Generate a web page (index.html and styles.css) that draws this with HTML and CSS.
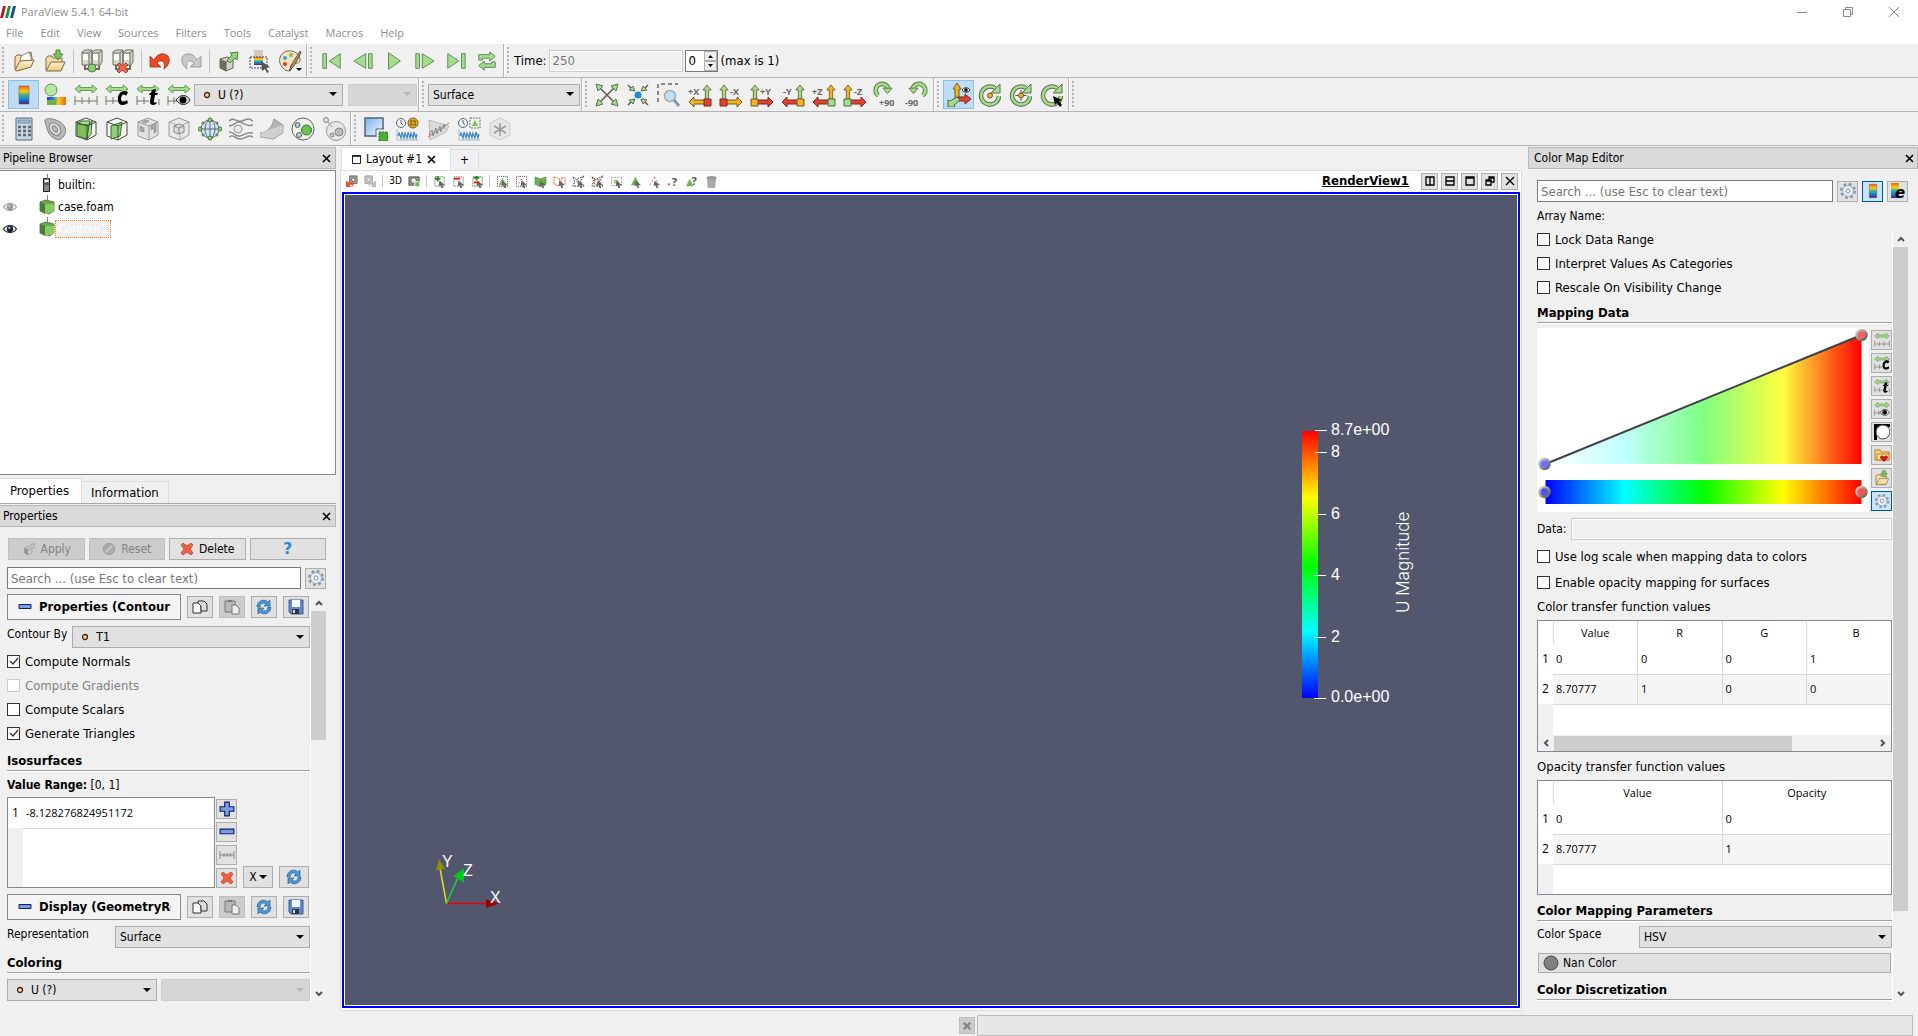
FILE: index.html
```html
<!DOCTYPE html>
<html lang="en">
<head>
<meta charset="utf-8">
<title>ParaView 5.4.1 64-bit</title>
<link rel="stylesheet" href="styles.css">
</head>
<body>
<svg class="defs" aria-hidden="true">
<defs>
<linearGradient id="jet" x1="0" y1="1" x2="0" y2="0"><stop offset="0" stop-color="#4b1a8c"/><stop offset=".25" stop-color="#1080d8"/><stop offset=".5" stop-color="#3fb08a"/><stop offset=".7" stop-color="#f5cf1c"/><stop offset="1" stop-color="#f4601a"/></linearGradient>
<linearGradient id="jetx"><stop offset="0" stop-color="#4b2a9c"/><stop offset=".3" stop-color="#1080d8"/><stop offset=".6" stop-color="#f5cf1c"/><stop offset="1" stop-color="#f4601a"/></linearGradient>
<linearGradient id="hsv"><stop offset="0" stop-color="#00f"/><stop offset=".25" stop-color="#0ff"/><stop offset=".5" stop-color="#0f0"/><stop offset=".75" stop-color="#ff0"/><stop offset="1" stop-color="#f00"/></linearGradient>
<linearGradient id="hsvfade"><stop offset="0" stop-color="#fff"/><stop offset=".25" stop-color="#bfffff"/><stop offset=".5" stop-color="#80ff80"/><stop offset=".75" stop-color="#ffff40"/><stop offset="1" stop-color="#f00"/></linearGradient>
<linearGradient id="hsvup" x1="0" y1="1" x2="0" y2="0"><stop offset="0" stop-color="#00f"/><stop offset=".25" stop-color="#0ff"/><stop offset=".5" stop-color="#0f0"/><stop offset=".75" stop-color="#ff0"/><stop offset="1" stop-color="#f00"/></linearGradient>
<linearGradient id="sky" x1="0" y1="0" x2="1" y2="1"><stop offset="0" stop-color="#7ab4e8"/><stop offset="1" stop-color="#f4faff"/></linearGradient>
<linearGradient id="paper" x1="0" y1="0" x2="0" y2="1"><stop offset="0" stop-color="#fdf2d0"/><stop offset="1" stop-color="#ecc878"/></linearGradient>
<linearGradient id="knob" x1="0" y1="0" x2="1" y2="1"><stop offset="0" stop-color="#d8d8d0"/><stop offset="1" stop-color="#55554c"/></linearGradient>
</defs>
<symbol id="arrow-r" viewBox="0 0 24 24"><path d="M6 3v18L19 12z"/></symbol>
<symbol id="open" viewBox="0 0 24 24"><path d="M3 20V8l2-2h4l1 2 4-2 5-3 1 6v3" fill="#f4ddA0" stroke="#7a6a48"/><path d="M8 13 9 7l8-4 3 8z" fill="#fff" stroke="#8a8470"/><path d="M3 21 8 12l14-1-3 7-14 4z" fill="url(#paper)" stroke="#7a6a48"/></symbol>
<symbol id="save-data" viewBox="0 0 24 24"><path d="M3 21V9l2-2h4l1 2h9v4" fill="#f4dda0" stroke="#7a6a48"/><path d="M3 22 8 13h14l-4 9z" fill="url(#paper)" stroke="#7a6a48"/><path d="M13 1h4v4h3l-5 6-5-6h3z" fill="#7cc35c" stroke="#4a8a38"/></symbol>
<symbol id="server" viewBox="0 0 24 24"><path d="M2 3 5 1h7v12l-2 3H2zM12 3l3-2h7v12l-2 3h-8z" fill="#d8d8d0" stroke="#6c6c60"/><path d="M2 4h7v11M12 4h7v11M9 4l3-3M19 4l3-3" fill="none" stroke="#6c6c60"/><path d="M3 5h5v6H3zM13 5h5v6h-5z" fill="#fff"/><path d="M5 16v4h4M19 16v4h-4" fill="none" stroke="#6c6c60" stroke-width="2"/></symbol>
<symbol id="connect" viewBox="0 0 24 24"><use href="#server"/><circle cx="12" cy="19" r="4" fill="#8fd07a" stroke="#4a7a40"/></symbol>
<symbol id="disconnect" viewBox="0 0 24 24"><use href="#server"/><path d="m8 14 3 3 4-3 2 2-3 3 3 3-2 2-4-3-3 3-2-2 3-3-3-3z" fill="#ef6a4c" stroke="#b03a24"/></symbol>
<symbol id="undo" viewBox="0 0 24 24"><path d="M2 7v11h11l-4-4c4-4 9-2 7 6C23 15 23 6 16 5c-4-1-8 2-10 6z" fill="#e84a24" stroke="#9a3018" stroke-width=".8"/></symbol>
<symbol id="redo" viewBox="0 0 24 24"><path d="M22 7v11H11l4-4c-4-4-9-2-7 6C1 15 1 6 8 5c4-1 8 2 10 6z" fill="#c8c8c8" stroke="#909090" stroke-width=".8"/></symbol>
<symbol id="extract" viewBox="0 0 24 24"><path d="m4 10 7-2 6 2v9l-7 3-6-3z" fill="#d4d4cc" stroke="#62625a"/><path d="m4 11 6 2v9l-6-3z" fill="#6c6c64"/><path d="m4 10 6 3 7-3M10 13v9" fill="none" stroke="#62625a"/><path d="m14 4 8-1-1 8-2-2-5 5-3-3 5-5z" fill="#8fd07a" stroke="#4a8a38"/></symbol>
<symbol id="range-pick" viewBox="0 0 24 24"><path d="M7 1h9v7H7z" fill="#d8c8bc"/><path d="M7 8h9v8H7z" fill="url(#jet)"/><path d="M3 8h17v11H3z" fill="none" stroke="#444" stroke-dasharray="2 1"/><path d="m14 12 9 6-4 1 3 4-2 1-2-4-3 2z" fill="#555"/></symbol>
<symbol id="palette" viewBox="0 0 24 24"><path d="M10 2C2 3-1 12 4 18c3 4 8 5 9 3s-1-3 0-5c2-3 9 0 9-5 0-6-6-10-12-9z" fill="#f6e2bc" stroke="#7a6a50"/><circle cx="13" cy="6" r="2" fill="#7cc35c"/><circle cx="7" cy="9" r="2" fill="#3aa0d8"/><circle cx="7" cy="15" r="2" fill="#d83a30"/><path d="M22 2 14 15l-3 7 5-5L23 4z" fill="#b09468" stroke="#4a4030" stroke-width=".8"/></symbol>
<symbol id="first" viewBox="0 0 24 24"><path d="M2 4h4v16H2zM21 4v16L9 12z"/></symbol>
<symbol id="back" viewBox="0 0 24 24"><path d="M18 4h4v16h-4zM15 4v16L2 12z"/></symbol>
<symbol id="fwd" viewBox="0 0 24 24"><path d="M2 4h4v16H2zM9 4v16l13-8z"/></symbol>
<symbol id="last" viewBox="0 0 24 24"><path d="M18 4h4v16h-4zM3 4v16l12-8z"/></symbol>
<symbol id="loop" viewBox="0 0 24 24"><path d="M3 11V5h12V2l6 5-6 5V9H7v2zM21 13v6H9v3l-6-5 6-5v3h8v-2z"/></symbol>
<symbol id="cbar" viewBox="0 0 24 24"><path d="M7 3h10v18H7z" fill="url(#jet)" stroke="#8a5a30" stroke-width=".6"/></symbol>
<symbol id="edit-cmap" viewBox="0 0 24 24"><circle cx="8" cy="7" r="6" fill="#b4e8a0" stroke="#6c8c60"/><path d="M4 14h19v8H4z" fill="url(#jetx)"/><path d="M4 17h9v5H4z" fill="#6ab04c"/></symbol>
<symbol id="resc" viewBox="0 0 24 24"><path d="m1 6 5-4v2.500h12V2l5 4-5 4V7.500H6V10z" fill="#a4dc8c" stroke="#6a9c58"/></symbol>
<symbol id="rescale" viewBox="0 0 24 24"><use href="#resc"/><path d="M1 13v9M8 14v7M15 14v7M23 13v9M1 18h22" stroke="#77776c" fill="none"/></symbol>
<symbol id="rescale-c" viewBox="0 0 24 24"><use href="#resc"/><path d="M1 13v9M8 14v7M1 18h12" stroke="#77776c" fill="none"/><path d="M23 9c-5-3-11 1-10 8 0 6 6 6 10 3l-1-3c-4 3-6 1-6-1 0-4 3-6 5-3z"/></symbol>
<symbol id="rescale-t" viewBox="0 0 24 24"><use href="#resc"/><path d="M1 13v9M8 14v7M1 18h12M23 16v6" stroke="#77776c" fill="none"/><path d="m16 7 4-1-1 4h3l-1 2h-2l-1 6c0 2 1 2 3 1l-1 2c-3 2-6 1-6-2l1-7h-2l1-2h1z"/></symbol>
<symbol id="rescale-eye" viewBox="0 0 24 24"><use href="#resc"/><path d="M1 13v9M7 14v7M1 18h10" stroke="#77776c" fill="none"/><path d="M9 17c4-6 11-6 14 0-3 6-10 6-14 0z" fill="#ddd" stroke="#222"/><circle cx="16" cy="17" r="3.500"/></symbol>
<symbol id="eye" viewBox="0 0 24 16"><path d="M1 8C6 0 18 0 23 8c-5 8-17 8-22 0z" fill="#f4f4f4" stroke="currentColor" stroke-width="2"/><circle cx="12" cy="8" r="5.500" fill="currentColor"/><circle cx="11" cy="6" r="2" fill="#bcd"/></symbol>
<symbol id="calc" viewBox="0 0 24 24"><path d="M4 1h16v22H4z" fill="#c4d8e8" stroke="#5a6470"/><path d="M6 3h12v3H6z" fill="#8ec4ec" stroke="#5a6470" stroke-width=".6"/><path d="M6 10h3m2 0h3m2 0h3M6 14h3m2 0h3m2 0h3M6 18h3m2 0h3m2 0h3" stroke="#666" stroke-width="2.500"/></symbol>
<symbol id="contour" viewBox="0 0 24 24"><path d="M2 5C0 1 9 0 17 5s6 12 3 15c-3 4-6 3-11 0C4 16 4 10 2 5z" fill="#b8b8b8" stroke="#888"/><ellipse cx="12" cy="12" rx="5" ry="7" transform="rotate(-38 12 12)" fill="#ddd" stroke="#888"/><ellipse cx="12" cy="12" rx="2" ry="3.500" transform="rotate(-38 12 12)" fill="#bbb" stroke="#888"/></symbol>
<symbol id="clip" viewBox="0 0 24 24"><path d="m2 5 10-4 10 4v13l-9 5-11-4z" fill="#f4f6f0" stroke="#4a4a40"/><path d="m3 7 12 1-2 14-10-3z" fill="#7cc05c" stroke="#35702a"/><path d="m3 7 4-3 9 0-1 4zM15 8l3-4-1 13-4 5z" fill="#aade94" stroke="#35702a"/><path d="m2 5 11 4 9-4M13 9v14" stroke="#4a4a40" fill="none"/></symbol>
<symbol id="slice" viewBox="0 0 24 24"><path d="m2 5 10-4 10 4v13l-9 5-11-4z" fill="#f4f6f0" stroke="#4a4a40"/><path d="m6 9 11-4-2 14-9 3z" fill="#8fd07a" stroke="#35702a"/><path d="m2 5 11 4 9-4M13 9v14" stroke="#4a4a40" fill="none"/></symbol>
<symbol id="thresh" viewBox="0 0 24 24"><path d="m2 5 10-4 10 4v13l-9 5-11-4z" fill="#e2e2e2" stroke="#999"/><path d="m2 5 11 4 9-4M13 9v14" stroke="#999" fill="none"/><path d="m4 9 4 2v4l-4-1zM15 9l5-3v9l-2 1v-5l-3 2zM9 3l4 1-3 2-4-1z" fill="#a8a8a8" stroke="#888" stroke-width=".6"/></symbol>
<symbol id="subset" viewBox="0 0 24 24"><path d="m2 5 10-4 10 4v13l-9 5-11-4z" fill="#e8e8e8" stroke="#999"/><path d="m2 5 11 4 9-4M13 9v14" stroke="#aaa" fill="none"/><path d="m7 9 5-2 5 2v6l-5 2-5-2zM7 9l5 2 5-2M12 11v6" fill="#ddd" stroke="#888"/></symbol>
<symbol id="glyph" viewBox="0 0 24 24"><circle cx="12" cy="12" r="9" fill="#cfe4f4" stroke="#5c6c7c"/><ellipse cx="12" cy="12" rx="5" ry="9" fill="none" stroke="#5c6c7c"/><path d="M1 12h22M12 3v18" stroke="#5c6c7c"/><g fill="#8fd07a" stroke="#4a7a30"><circle cx="12" cy="3" r="2"/><circle cx="12" cy="21" r="2"/><circle cx="2" cy="12" r="2"/><circle cx="22" cy="12" r="2"/><circle cx="5" cy="6" r="1"/><circle cx="19" cy="6" r="1"/><circle cx="5" cy="18" r="1"/><circle cx="19" cy="18" r="1"/></g></symbol>
<symbol id="stream" viewBox="0 0 24 24"><path d="M0 4c5-5 7 2 13 0s6-3 11 0M0 9c6-1 6-4 10-4s6 5 14 3M0 15c6 0 6 5 11 4s6-4 13-3M0 20c5-4 6 3 12 2s7-5 12-2" fill="none" stroke="#8a8a8a" stroke-width="1.500"/><circle cx="9" cy="12" r="4" fill="#e8e8e8" stroke="#999"/></symbol>
<symbol id="warp" viewBox="0 0 24 24"><path d="M0 16C8 15 12 10 14 2l9 6c-1 8-5 12-10 14z" fill="#b4b4b4" stroke="#999"/><path d="M0 16v4l13 2 10-6V8" fill="#d0d0d0" stroke="#aaa"/></symbol>
<symbol id="group" viewBox="0 0 24 24"><circle cx="12" cy="12" r="11" fill="#eef4ea" stroke="#62625a"/><circle cx="6.500" cy="8" r="2.500" fill="#aac8e0" stroke="#62625a"/><circle cx="15.500" cy="13" r="5" fill="#6cc050" stroke="#3c7030"/><circle cx="8" cy="18" r="2.500" fill="#aad8c0" stroke="#62625a"/></symbol>
<symbol id="extract-level" viewBox="0 0 24 24"><circle cx="14" cy="14" r="9.500" fill="#e8e8e8" stroke="#999"/><circle cx="4" cy="3" r="2.500" fill="#ddd" stroke="#888"/><circle cx="17" cy="15" r="4" fill="#bbb" stroke="#888"/><circle cx="10" cy="18" r="2" fill="#ccc" stroke="#888"/><path d="M6 5l4 5" stroke="#999"/></symbol>
<symbol id="sel-extract" viewBox="0 0 24 24"><path d="M1 1h18v18H1z" fill="url(#sky)" stroke="#506478" stroke-width="1.500"/><path d="M12 12h8v8h-8z" fill="#f0f0f0"/><path d="M12 20v-8h8" fill="none" stroke="#506478"/><path d="M15 15h9v9h-9z" fill="#4cb038" stroke="#2c7020" stroke-dasharray="2 1"/></symbol>
<symbol id="wave" viewBox="0 0 24 24"><path d="M2 12v11h21" fill="none" stroke="#a8bccc"/><path d="m3 19 1-3 2 5 1-6 2 6 1-5 2 5 1-6 2 6 1-5 2 5 1-6 2 6 1-4" fill="none" stroke="#3a84c0" stroke-width="1.200"/></symbol>
<symbol id="plot-time" viewBox="0 0 24 24"><use href="#wave"/><circle cx="6" cy="6" r="4.500" fill="#eef6fc" stroke="#5a6470"/><path d="M6 3v3l2 2" fill="none" stroke="#5a6470"/><circle cx="18" cy="6" r="5" fill="#e8b020" stroke="#7a5a18"/><path d="M15 4h6M15 8h6M16 4v4M20 4v4" stroke="#7a5a18"/></symbol>
<symbol id="plot-line" viewBox="0 0 24 24"><path d="M3 3 23 9 20 15 4 23z" fill="#dcdcdc" stroke="#bbb"/><path d="M2 20 23 6M3 18l3-5 1 6 3-8 1 6 3-8 1 6 3-8 1 5" fill="none" stroke="#888"/></symbol>
<symbol id="plot-sel" viewBox="0 0 24 24"><use href="#wave"/><circle cx="6" cy="6" r="4.500" fill="#eef6fc" stroke="#5a6470"/><path d="M6 3v3l2 2" fill="none" stroke="#5a6470"/><path d="M13 1h10v10H13z" fill="none" stroke="#5a8a48" stroke-dasharray="2 1"/><path d="m18 3 3 6h-6z" fill="#7cc35c"/></symbol>
<symbol id="probe" viewBox="0 0 24 24"><path d="m2 6 10-5 10 5v12l-10 5-10-5z" fill="#e6e6e6" stroke="#ccc"/><path d="M12 6v13M6 9l12 7M18 9 6 16" stroke="#999" stroke-width="1.500"/></symbol>
<symbol id="reset" viewBox="0 0 24 24"><path d="m5 5 14 14M19 5 5 19" stroke="#5e5e50" stroke-width="1.500"/><path d="m1 1 7 2-5 5zM23 1l-2 7-5-5zM1 23l2-7 5 5zM23 23l-7-2 5-5z" fill="#a4dc8c" stroke="#5a7050"/></symbol>
<symbol id="zoomto" viewBox="0 0 24 24"><path d="m2 2 5 5M22 2l-5 5M2 22l5-5M22 22l-5-5" stroke="#5e5e50" stroke-width="1.500"/><path d="M9 8 3 7l4-4zM15 8l2-5 4 4zM9 16l-2 5-4-4zM15 16l6 1-4 4z" fill="#a4dc8c" stroke="#5a7050"/><circle cx="12" cy="12" r="3.500" fill="#1f8fd8"/></symbol>
<symbol id="zoombox" viewBox="0 0 24 24"><path d="M1 19V1h20" fill="none" stroke="#666" stroke-width="1.500" stroke-dasharray="4 3"/><circle cx="13" cy="13" r="5.500" fill="#bfe2f8" stroke="#aaa" stroke-width="1.500"/><path d="m17 17 5 6" stroke="#8a9ab0" stroke-width="3"/></symbol>
<symbol id="up" viewBox="0 0 12 24"><path d="M6 0 1 6h3v11h4V6h3z" stroke="#6a5a30"/></symbol>
<symbol id="rot" viewBox="0 0 24 24"><path d="M8 18A7 7 0 1 1 19 11" fill="none" stroke="#5a7a48" stroke-width="5"/><path d="M8 18A7 7 0 1 1 19 11" fill="none" stroke="#a4dc8c" stroke-width="3"/><path d="M13 10h10l-5 6z" fill="#a4dc8c" stroke="#5a7a48"/></symbol>
<symbol id="orient" viewBox="0 0 24 24"><path d="M8 15V6H6l4-6 4 6h-2v9z" fill="#f4b41c" stroke="#6a5a30"/><path d="M10 14h8v-3l6 5-6 5v-3h-8z" fill="#e84030" stroke="#702a20"/><path d="m10 14 3 3-6 5 1 2H1v-7l2 1z" fill="#a4dc8c" stroke="#4a6a40"/><path d="M15 7c2-3 6-3 8 0-2 3-6 3-8 0z" fill="#fff" stroke="#333"/><circle cx="19" cy="7" r="1.800"/></symbol>
<symbol id="ring" viewBox="0 0 24 24"><path d="M17 5A9 9 0 1 0 21 13" fill="none" stroke="#5a7050" stroke-width="4.500"/><path d="M17 5A9 9 0 1 0 21 13" fill="none" stroke="#a4dc8c" stroke-width="2.500"/><path d="M22 1v9h-9z" fill="#a4dc8c" stroke="#5a7050"/></symbol>
<symbol id="center-show" viewBox="0 0 24 24"><use href="#ring"/><circle cx="12" cy="12.500" r="2.500" fill="#f4b41c" stroke="#6a5a30"/></symbol>
<symbol id="center-reset" viewBox="0 0 24 24"><use href="#ring"/><path d="M12 7v11M6.500 12.500h11" stroke="#555"/><circle cx="12" cy="12.500" r="2.500" fill="#f4b41c" stroke="#6a5a30"/></symbol>
<symbol id="center-pick" viewBox="0 0 24 24"><use href="#ring"/><path d="m13 13 9 4-3 1 3 4-2 2-3-4-2 2z"/></symbol>
<symbol id="cube" viewBox="0 0 16 16"><path d="m1 3 6-2 8 2v9l-5 3-9-3z" fill="#6aaa48" stroke="#4c6a3c" stroke-width=".8"/><path d="m1 3 5 2v10l-5-3z" fill="#4c7a3a"/><path d="M6 5h9v8l-9 2z" fill="#86cc60"/></symbol>
<symbol id="host" viewBox="0 0 8 14"><path d="M1 .500h6v13H1z" fill="#888" stroke="#222"/><path d="M2 2h4v2H2z" fill="#fff"/><path d="M2 6h4" stroke="#222"/></symbol>
<symbol id="gear" viewBox="0 0 18 18"><circle cx="9" cy="9" r="6.500" fill="none" stroke="#8494a4" stroke-width="3" stroke-dasharray="2.600 2.500"/><circle cx="9" cy="9" r="5.500" fill="#e8eef4" stroke="#a0acb8"/><circle cx="9" cy="9" r="2" fill="#f8f8f8" stroke="#8494a4"/></symbol>
<symbol id="copy" viewBox="0 0 16 16"><path d="M1 4h5l3 3v7H1z" fill="#fafafa" stroke="#333"/><path d="M6 2h6l3 3v7H9V7L6 4z" fill="#ddd" stroke="#333"/></symbol>
<symbol id="paste" viewBox="0 0 16 16"><path d="M1 2h10v11H1z" fill="#b8b8b8" stroke="#777"/><path d="M4 1h4v2H4z" fill="#777"/><path d="M8 6h4l3 3v6H8z" fill="#eee" stroke="#777"/></symbol>
<symbol id="refresh" viewBox="0 0 16 16"><path d="M1 8C1 2 8-1 12 3l2-2v6H8l2-2C8 3 4 4 4 8zM15 8c0 6-7 9-11 5l-2 2V9h6l-2 2c2 2 6 1 6-3z" fill="#4a9ad8" stroke="#2a5c94" stroke-width=".7"/></symbol>
<symbol id="disk" viewBox="0 0 16 16"><path d="M1 1h14v14H3l-2-2z" fill="#5c8ccc" stroke="#3c5c90"/><path d="M4 1h8v7H4z" fill="#f4f8ff"/><path d="M4 10h7v5H4z" fill="#334"/><path d="M5 11h2v3H5z" fill="#ddd"/></symbol>
<symbol id="minus" viewBox="0 0 14 14"><path d="M1 4.500h12v4H1z" fill="#7c9ce8" stroke="#102060"/></symbol>
<symbol id="plus" viewBox="0 0 14 14"><path d="M5 1h4v4h4v4H9v4H5V9H1V5h4z" fill="#7c9ce8" stroke="#102060"/></symbol>
<symbol id="redx" viewBox="0 0 14 14"><path d="m3 1 4 3 4-3 2 2-3 4 3 4-2 2-4-3-4 3-2-2 3-4-3-4z" fill="#f0603c" stroke="#b84830" stroke-width=".8"/></symbol>
<symbol id="ticks" viewBox="0 0 16 10"><path d="M1 1v8M5 3v4M8 3v4M11 3v4M15 1v8M1 5h14" stroke="#888878" fill="none"/></symbol>
<symbol id="close" viewBox="0 0 9 9"><path d="m1 1 7 7M8 1 1 8" stroke="#000" stroke-width="1.600" fill="none"/></symbol>
<symbol id="chev" viewBox="0 0 8 6"><path d="m1 5 3-3 3 3" stroke="#555" stroke-width="2" fill="none"/></symbol>
<symbol id="dot" viewBox="0 0 8 8"><circle cx="4" cy="4" r="2.500" fill="#fbd8a0" stroke="#3a2810" stroke-width="1.300"/></symbol>
<symbol id="ptr" viewBox="0 0 14 14"><path d="m7 6 6 5-3 0 1 3-2 0-1-3-2 1z" fill="#666"/></symbol>
<symbol id="box" viewBox="0 0 14 14"><path d="M2 2h10v10H2z" fill="none" stroke="#444" stroke-dasharray="1 1"/><use href="#ptr"/></symbol>
<symbol id="s-add" viewBox="0 0 14 14"><use href="#box"/><path d="M5 1v6M2 4h6" stroke="#2a8a20" stroke-width="2"/></symbol>
<symbol id="s-sub" viewBox="0 0 14 14"><use href="#box"/><path d="M2 4h7" stroke="#e02010" stroke-width="2"/></symbol>
<symbol id="s-tog" viewBox="0 0 14 14"><use href="#box"/><path d="M6 1v5M3 3h6" stroke="#2a8a20" stroke-width="2"/><path d="M3 8h6" stroke="#e02010" stroke-width="2"/></symbol>
<symbol id="s-cell" viewBox="0 0 14 14"><path d="M1.500 1.500h11v11h-11z" fill="none" stroke="#444" stroke-dasharray="1 1"/><path d="m7 3 4 8H3z" fill="#74bc54"/><use href="#ptr"/></symbol>
<symbol id="s-pt" viewBox="0 0 14 14"><path d="M1.500 1.500h11v11h-11z" fill="none" stroke="#444" stroke-dasharray="1 1"/><path d="m7 4 4 7M7 4l-4 7" stroke="#f06040" stroke-dasharray="2 2"/><use href="#ptr"/></symbol>
<symbol id="s-fcell" viewBox="0 0 14 14"><path d="m1 2 6 2 6-2v8l-6 3-6-3z" fill="#68b048" stroke="#555" stroke-width=".6" stroke-dasharray="2 1"/><use href="#ptr"/></symbol>
<symbol id="s-fpt" viewBox="0 0 14 14"><path d="m1 2 6 2v8L1 10zM9 3h4v7H9z" fill="none" stroke="#e05030" stroke-dasharray="2 1"/><use href="#ptr"/></symbol>
<symbol id="s-poly" viewBox="0 0 14 14"><path d="m1 2 4 3 8-4-4 6 4 5H1l2-5z" fill="none" stroke="#333" stroke-dasharray="2 1"/><path d="m4 6 4 0-1 4z" fill="#74bc54"/><use href="#ptr"/></symbol>
<symbol id="s-ppt" viewBox="0 0 14 14"><path d="m1 2 4 3 8-4-4 6 4 5H1l2-5z" fill="none" stroke="#333" stroke-dasharray="2 1"/><path d="M4 5h5v5H4z" fill="none" stroke="#e04020" stroke-dasharray="2 1"/><use href="#ptr"/></symbol>
<symbol id="s-block" viewBox="0 0 14 14"><path d="M1.500 2.500h11v9h-11z" fill="none" stroke="#999" stroke-dasharray="2 1"/><path d="M4 5h5v4H4z" fill="#9cc88c"/><use href="#ptr"/></symbol>
<symbol id="s-tri" viewBox="0 0 14 14"><path d="m7 2 5 9H2z" fill="#6cb84c"/><use href="#ptr"/></symbol>
<symbol id="s-tript" viewBox="0 0 14 14"><path d="m7 2 5 9M7 2l-5 9" stroke="#f06040" stroke-dasharray="2 2"/><use href="#ptr"/></symbol>
<symbol id="trash" viewBox="0 0 14 14"><path d="M2 4h10l-1 10H3z" fill="#aaa"/><ellipse cx="7" cy="3" rx="5.500" ry="2" fill="#999"/></symbol>
<symbol id="cam-undo" viewBox="0 0 14 14"><path d="M5 1h8v8H5z" fill="#a8a898" stroke="#666"/><circle cx="9" cy="5" r="2" fill="#eee" stroke="#555"/><path d="M1 6v7h6L5 11c2-2 3 0 3 2 3-4 0-7-4-5z" fill="#e8502c"/></symbol>
<symbol id="cam-redo" viewBox="0 0 14 14"><path d="M1 1h8v8H1z" fill="#ccc" stroke="#999"/><circle cx="5" cy="5" r="2" fill="#eee" stroke="#999"/><path d="M13 6v7H7l2-2c-2-2-3 0-3 2-3-4 0-7 4-5z" fill="#bbb"/></symbol>
<symbol id="cam" viewBox="0 0 14 14"><path d="M1 2h11v9H1z" fill="#909884" stroke="#555"/><circle cx="6" cy="6" r="3" fill="#eee" stroke="#555"/><circle cx="10" cy="10" r="3" fill="#6cc050" stroke="#fff"/></symbol>
</svg>

<header class="titlebar">
  <svg class="logo" viewBox="0 0 16 12"><path d="M3 0h3L3 12H0z" fill="#b01c30"/><path d="M8 0h3L8 12H5z" fill="#18963c"/><path d="M13 0h3l-3 12h-3z" fill="#184c94"/></svg>
  <span>ParaView 5.4.1 64-bit</span>
  <div class="winctl">
    <button aria-label="Minimize"><svg viewBox="0 0 12 12"><path d="M1 6.500h10"/></svg></button>
    <button aria-label="Restore"><svg viewBox="0 0 12 12"><path d="M1.500 3.500h7v7h-7zM3.500 3V1.500h7v7H9"/></svg></button>
    <button aria-label="Close"><svg viewBox="0 0 12 12"><path d="m1 1 10 10M11 1 1 11"/></svg></button>
  </div>
</header>
<nav class="menubar"><a href="#">File</a><a href="#">Edit</a><a href="#">View</a><a href="#">Sources</a><a href="#">Filters</a><a href="#">Tools</a><a href="#">Catalyst</a><a href="#">Macros</a><a href="#">Help</a></nav>

<div class="toolrow">
  <div class="tools">
    <button aria-label="Open"><svg><use href="#open"/></svg></button><button aria-label="Save data"><svg><use href="#save-data"/></svg></button><i class="sep"></i>
    <button aria-label="Connect"><svg><use href="#connect"/></svg></button><button aria-label="Disconnect"><svg><use href="#disconnect"/></svg></button><i class="sep"></i>
    <button aria-label="Undo"><svg><use href="#undo"/></svg></button><button aria-label="Redo"><svg><use href="#redo"/></svg></button><i class="sep"></i>
    <button aria-label="Auto apply"><svg><use href="#extract"/></svg></button><button aria-label="Find data"><svg><use href="#range-pick"/></svg></button><button class="has-menu" aria-label="Color palette"><svg><use href="#palette"/></svg></button>
  </div>
  <div class="tools vcr">
    <button aria-label="First frame"><svg><use href="#first"/></svg></button><button aria-label="Previous frame"><svg><use href="#back"/></svg></button><button aria-label="Play"><svg><use href="#arrow-r"/></svg></button><button aria-label="Next frame"><svg><use href="#fwd"/></svg></button><button aria-label="Last frame"><svg><use href="#last"/></svg></button><button aria-label="Loop"><svg><use href="#loop"/></svg></button>
  </div>
  <div class="tools last">
    <label for="time">Time:</label><input id="time" class="field time" value="250" disabled>
    <div class="spin"><input value="0" aria-label="Time step"><svg viewBox="0 0 13 20"><path d="M.500.500h12v9H.500zM.500 10.500h12v9H.500z" fill="#eee" stroke="#adadad"/><path d="m4 7 2.500-3L9 7zM4 13l2.500 3L9 13z"/></svg></div>
    <span>(max is 1)</span>
  </div>
</div>
<div class="toolrow">
  <div class="tools">
    <button class="on" aria-label="Color legend"><svg><use href="#cbar"/></svg></button><button aria-label="Edit color map"><svg><use href="#edit-cmap"/></svg></button><button aria-label="Rescale to data"><svg><use href="#rescale"/></svg></button><button aria-label="Rescale custom"><svg><use href="#rescale-c"/></svg></button><button aria-label="Rescale over time"><svg><use href="#rescale-t"/></svg></button><button aria-label="Rescale visible"><svg><use href="#rescale-eye"/></svg></button>
    <div class="combo with-dot color-by"><svg><use href="#dot"/></svg><select aria-label="Color by"><option>U (?)</option></select></div>
    <div class="combo component"><select aria-label="Component" disabled></select></div>
  </div>
  <div class="tools"><div class="combo repr"><select aria-label="Representation"><option>Surface</option></select></div></div>
  <div class="tools">
    <button aria-label="Reset camera"><svg><use href="#reset"/></svg></button><button aria-label="Zoom to data"><svg><use href="#zoomto"/></svg></button><button aria-label="Zoom to box"><svg><use href="#zoombox"/></svg></button>
    <button aria-label="Set view +X"><svg viewBox="0 0 24 24"><use href="#up" x="14" width="10" height="24" fill="#a4dc8c"/><path d="m1 19 5-5v3h11v4H6v3z" fill="#f4b41c" stroke="#6a5a30"/><path d="M16 16h7v7h-7z" fill="#e84030" stroke="#702a20"/><text x="0" y="12">+X</text></svg></button>
    <button aria-label="Set view -X"><svg viewBox="0 0 24 24"><use href="#up" x="0" width="10" height="24" fill="#a4dc8c"/><path d="m23 19-5-5v3H7v4h11v3z" fill="#f4b41c" stroke="#6a5a30"/><path d="M1 16h7v7H1z" fill="#e84030" stroke="#702a20"/><text x="11" y="12">-X</text></svg></button>
    <button aria-label="Set view +Y"><svg viewBox="0 0 24 24"><use href="#up" x="0" width="10" height="24" fill="#a4dc8c"/><path d="m23 19-5-5v3H7v4h11v3z" fill="#e84030" stroke="#702a20"/><path d="M1 16h7v7H1z" fill="#f4b41c" stroke="#6a5a30"/><text x="10" y="12">+Y</text></svg></button>
    <button aria-label="Set view -Y"><svg viewBox="0 0 24 24"><use href="#up" x="14" width="10" height="24" fill="#a4dc8c"/><path d="m1 19 5-5v3h11v4H6v3z" fill="#e84030" stroke="#702a20"/><path d="M16 16h7v7h-7z" fill="#f4b41c" stroke="#6a5a30"/><text x="2" y="12">-Y</text></svg></button>
    <button aria-label="Set view +Z"><svg viewBox="0 0 24 24"><use href="#up" x="14" width="10" height="24" fill="#f4b41c"/><path d="m1 19 5-5v3h11v4H6v3z" fill="#e84030" stroke="#702a20"/><path d="M16 16h7v7h-7z" fill="#a4dc8c" stroke="#4a6a40"/><text x="0" y="12">+Z</text></svg></button>
    <button aria-label="Set view -Z"><svg viewBox="0 0 24 24"><use href="#up" x="0" width="10" height="24" fill="#f4b41c"/><path d="m23 19-5-5v3H7v4h11v3z" fill="#e84030" stroke="#702a20"/><path d="M1 16h7v7H1z" fill="#a4dc8c" stroke="#4a6a40"/><text x="11" y="12">-Z</text></svg></button>
    <button aria-label="Rotate +90"><svg viewBox="0 0 24 24"><use href="#rot" x="-3" y="-4" width="22" height="22"/><text x="5" y="23">+90</text></svg></button>
    <button aria-label="Rotate -90"><svg viewBox="0 0 24 24"><use href="#rot" transform="matrix(-1 0 0 1 25 -4)" width="22" height="22"/><text x="0" y="23">-90</text></svg></button>
  </div>
  <div class="tools">
    <button class="on" aria-label="Orientation axes"><svg><use href="#orient"/></svg></button><button aria-label="Show center"><svg><use href="#center-show"/></svg></button><button aria-label="Reset center"><svg><use href="#center-reset"/></svg></button><button aria-label="Pick center"><svg><use href="#center-pick"/></svg></button>
  </div>
  <div class="tools last"></div>
</div>
<div class="toolrow">
  <div class="tools">
    <button aria-label="Calculator"><svg><use href="#calc"/></svg></button><button aria-label="Contour"><svg><use href="#contour"/></svg></button><button aria-label="Clip"><svg><use href="#clip"/></svg></button><button aria-label="Slice"><svg><use href="#slice"/></svg></button><button aria-label="Threshold"><svg><use href="#thresh"/></svg></button><button aria-label="Extract subset"><svg><use href="#subset"/></svg></button><button aria-label="Glyph"><svg><use href="#glyph"/></svg></button><button aria-label="Stream tracer"><svg><use href="#stream"/></svg></button><button aria-label="Warp"><svg><use href="#warp"/></svg></button><button aria-label="Group datasets"><svg><use href="#group"/></svg></button><button aria-label="Extract level"><svg><use href="#extract-level"/></svg></button>
  </div>
  <div class="tools last">
    <button aria-label="Extract selection"><svg><use href="#sel-extract"/></svg></button><button aria-label="Plot global variables"><svg><use href="#plot-time"/></svg></button><button aria-label="Plot over line"><svg><use href="#plot-line"/></svg></button><button aria-label="Plot selection over time"><svg><use href="#plot-sel"/></svg></button><button aria-label="Probe"><svg><use href="#probe"/></svg></button>
  </div>
</div>

<main class="workspace">
  <aside class="left">
    <h2 class="dock">Pipeline Browser<button aria-label="Close"><svg><use href="#close"/></svg></button></h2>
    <ul class="tree">
      <li><span class="vis"></span><span class="node"><svg class="host"><use href="#host"/></svg></span><span class="name">builtin:</span></li>
      <li><span class="vis off"><svg><use href="#eye"/></svg></span><span class="node"><svg><use href="#cube"/></svg></span><span class="name">case.foam</span></li>
      <li><span class="vis"><svg><use href="#eye"/></svg></span><span class="node"><svg><use href="#cube"/></svg></span><span class="name selected">Contour1</span></li>
    </ul>
    <div class="tabs"><button class="active">Properties</button><button>Information</button></div>
    <h2 class="dock">Properties<button aria-label="Close"><svg><use href="#close"/></svg></button></h2>
    <div class="actions">
      <button class="btn" disabled><svg class="faded"><use href="#extract"/></svg>Apply</button>
      <button class="btn" disabled><svg viewBox="0 0 16 16"><circle cx="8" cy="8" r="6.500" fill="#aaa" stroke="#999"/><path d="m4 12 8-8" stroke="#ccc" stroke-width="2"/></svg>Reset</button>
      <button class="btn"><svg><use href="#redx"/></svg>Delete</button>
      <button class="btn help">?</button>
    </div>
    <div class="searchrow"><input class="field" placeholder="Search ... (use Esc to clear text)" aria-label="Search properties"><button class="btn sq" aria-label="Advanced"><svg><use href="#gear"/></svg></button></div>
    <div class="scroller">
      <div class="props">
        <div class="group-head"><button class="fold"><svg><use href="#minus"/></svg><span>Properties (Contour1)</span></button><button class="btn" aria-label="Copy"><svg><use href="#copy"/></svg></button><button class="btn" disabled aria-label="Paste"><svg><use href="#paste"/></svg></button><button class="btn" aria-label="Restore"><svg><use href="#refresh"/></svg></button><button class="btn" aria-label="Save"><svg><use href="#disk"/></svg></button></div>
        <div class="row"><label for="contour-by">Contour By</label><div class="combo with-dot"><svg><use href="#dot"/></svg><select id="contour-by"><option>T1</option></select></div></div>
        <div class="checks">
          <label><input type="checkbox" checked>Compute Normals</label>
          <label class="dim"><input type="checkbox" disabled>Compute Gradients</label>
          <label><input type="checkbox">Compute Scalars</label>
          <label><input type="checkbox" checked>Generate Triangles</label>
        </div>
        <h3>Isosurfaces</h3>
        <p class="range"><b>Value Range:</b> [0, 1]</p>
        <div class="iso">
          <div class="grid"><table><tbody><tr><th scope="row">1</th><td>-8.128276824951172</td></tr></tbody></table></div>
          <div class="stack"><button class="btn" aria-label="Add"><svg><use href="#plus"/></svg></button><button class="btn" aria-label="Remove"><svg><use href="#minus"/></svg></button><button class="btn" aria-label="Add range"><svg><use href="#ticks"/></svg></button><button class="btn" aria-label="Remove all"><svg><use href="#redx"/></svg></button></div>
          <button class="btn wide">X<svg class="tri" viewBox="0 0 8 5"><path d="M0 0h8L4 4z"/></svg></button><button class="btn wide" aria-label="Reset values"><svg><use href="#refresh"/></svg></button>
        </div>
        <div class="group-head"><button class="fold"><svg><use href="#minus"/></svg><span>Display (GeometryRepresentation)</span></button><button class="btn" aria-label="Copy"><svg><use href="#copy"/></svg></button><button class="btn" disabled aria-label="Paste"><svg><use href="#paste"/></svg></button><button class="btn" aria-label="Restore"><svg><use href="#refresh"/></svg></button><button class="btn" aria-label="Save"><svg><use href="#disk"/></svg></button></div>
        <div class="row repr-row"><label for="repr">Representation</label><div class="combo"><select id="repr"><option>Surface</option></select></div></div>
        <h3>Coloring</h3>
        <div class="pair"><div class="combo with-dot"><svg><use href="#dot"/></svg><select aria-label="Coloring array"><option>U (?)</option></select></div><div class="combo"><select aria-label="Coloring component" disabled></select></div></div>
      </div>
      <div class="vbar short"><svg><use href="#chev"/></svg><i></i><svg class="down"><use href="#chev"/></svg></div>
    </div>
  </aside>

  <section class="center">
    <div class="tabs views"><button class="active"><svg class="win" viewBox="0 0 10 10"><path d="M.500.500h9v9h-9zM0 1.500h10" fill="none" stroke="#000"/></svg>Layout #1<svg><use href="#close"/></svg></button><button class="add">+</button></div>
    <div class="frame">
      <div class="viewbar">
        <button aria-label="Camera undo"><svg><use href="#cam-undo"/></svg></button><button aria-label="Camera redo"><svg><use href="#cam-redo"/></svg></button><i></i>
        <button class="threed">3D</button><button aria-label="Adjust camera"><svg><use href="#cam"/></svg></button><i></i>
        <button aria-label="Add selection"><svg><use href="#s-add"/></svg></button><button aria-label="Subtract selection"><svg><use href="#s-sub"/></svg></button><button aria-label="Toggle selection"><svg><use href="#s-tog"/></svg></button><i></i>
        <button aria-label="Select cells on"><svg><use href="#s-cell"/></svg></button><button aria-label="Select points on"><svg><use href="#s-pt"/></svg></button><button aria-label="Select cells through"><svg><use href="#s-fcell"/></svg></button><button aria-label="Select points through"><svg><use href="#s-fpt"/></svg></button><button aria-label="Select cells polygon"><svg><use href="#s-poly"/></svg></button><button aria-label="Select points polygon"><svg><use href="#s-ppt"/></svg></button><button aria-label="Select block"><svg><use href="#s-block"/></svg></button><button aria-label="Interactive cells"><svg><use href="#s-tri"/></svg></button><button aria-label="Interactive points"><svg><use href="#s-tript"/></svg></button><button aria-label="Hover points"><svg viewBox="0 0 14 14"><path d="M1 9h2v2H1z" fill="#e04020"/><text x="5" y="12">?</text></svg></button><button aria-label="Hover cells"><svg viewBox="0 0 14 14"><path d="m4 4 4 8H0z" fill="#6cb84c"/><text x="6" y="11">?</text></svg></button><button aria-label="Clear selection"><svg><use href="#trash"/></svg></button>
        <a class="vname" href="#">RenderView1</a>
        <div class="vbtns">
          <button aria-label="Split horizontal"><svg viewBox="0 0 10 10"><path d="M1 1h8v8H1zM5 1v8"/></svg></button><button aria-label="Split vertical"><svg viewBox="0 0 10 10"><path d="M1 1h8v8H1zM1 5h8"/></svg></button><button aria-label="Maximize"><svg viewBox="0 0 10 10"><path d="M1 1h8v8H1zM1 2h8"/></svg></button><button aria-label="Float"><svg viewBox="0 0 10 10"><path d="M1 4h5v5H1zM1 5h5M4 4V1h5v5H6M4 2h5"/></svg></button><button aria-label="Close view"><svg viewBox="0 0 10 10"><path d="m1 1 8 8M9 1 1 9"/></svg></button>
        </div>
      </div>
      <div class="canvas">
        <svg class="legend" viewBox="0 0 120 280" aria-label="Color legend">
          <path d="M5 6h16v267H5z" fill="url(#hsvup)"/>
          <path d="M18 5.500h12M18 27.500h12M17 89.500h12M17 150.500h12M17 212.500h12M17 273.500h12" stroke="#fff"/>
          <text x="34" y="10">8.7e+00</text><text x="34" y="32">8</text><text x="34" y="94">6</text><text x="34" y="155">4</text><text x="34" y="217">2</text><text x="34" y="277">0.0e+00</text>
          <text class="axis-title" transform="translate(112 188) rotate(-90)">U Magnitude</text>
        </svg>
        <svg class="triad" viewBox="0 0 90 75">
          <path d="M21.500 58.500H64" stroke="#f00000" stroke-width="1.500"/><path d="m61 54 13 4.500L61 63z" fill="#900"/>
          <path d="m21.500 58.500-7-38" stroke="#e0e020" stroke-width="1.500"/><path d="m14 14-3 11 9-1z" fill="#8c8c00"/>
          <path d="m21.500 58.500 11-25" stroke="#20d040" stroke-width="1.500"/><path d="m38 25-8 6 8 5z" fill="#00c818" stroke="#00c818" stroke-width="2"/>
          <text x="65" y="58">X</text><text x="17" y="22">Y</text><text x="38" y="31">Z</text>
        </svg>
      </div>
    </div>
  </section>

  <aside class="right">
    <h2 class="dock">Color Map Editor<button aria-label="Close"><svg><use href="#close"/></svg></button></h2>
    <div class="searchrow"><input class="field" placeholder="Search ... (use Esc to clear text)" aria-label="Search color map"><button class="btn sq" aria-label="Advanced"><svg><use href="#gear"/></svg></button><button class="btn sq on" aria-label="Show legend"><svg><use href="#cbar"/></svg></button><button class="btn sq" aria-label="Edit legend"><svg viewBox="0 0 18 18"><path d="M2 1h8v15H2z" fill="url(#jet)"/><text class="e" x="6" y="16">e</text></svg></button></div>
    <p class="array">Array Name:</p>
    <div class="scroller">
      <div class="cmap">
        <div class="checks">
          <label><input type="checkbox">Lock Data Range</label>
          <label><input type="checkbox">Interpret Values As Categories</label>
          <label><input type="checkbox">Rescale On Visibility Change</label>
        </div>
        <h3>Mapping Data</h3>
        <div class="mapping">
          <svg class="curve" viewBox="0 0 331 184">
            <path d="M8 136 324 7v129z" fill="url(#hsvfade)"/><path d="M8 152h316v24H8z" fill="url(#hsv)"/><path d="M8 136 324 7" stroke="#404048" stroke-width="2"/>
            <g stroke="url(#knob)" stroke-width="2.500"><circle cx="7" cy="136" r="5" fill="#7070ff"/><circle cx="324" cy="7" r="5" fill="#ff6060"/><circle cx="7" cy="164" r="5" fill="#5050f0"/><circle cx="324" cy="164" r="5" fill="#ff5050"/></g>
          </svg>
          <div class="stack">
            <button class="btn" aria-label="Rescale to data"><svg><use href="#rescale"/></svg></button><button class="btn" aria-label="Rescale custom"><svg><use href="#rescale-c"/></svg></button><button class="btn" aria-label="Rescale over time"><svg><use href="#rescale-t"/></svg></button><button class="btn" aria-label="Rescale visible"><svg><use href="#rescale-eye"/></svg></button>
            <button class="btn" aria-label="Invert"><svg viewBox="0 0 16 16"><path d="M0 0h16v3H3v13H0z"/><circle cx="9" cy="8" r="7" fill="#fff" stroke="#444"/></svg></button>
            <button class="btn" aria-label="Choose preset"><svg viewBox="0 0 16 16"><path d="M1 3h5l1 2h8v8H1z" fill="#fbd870" stroke="#c07820"/><path d="M3 7h12v6H3z" fill="#fff0a8" stroke="#c07820"/><path d="M10 15 6 11c0-3 3-3 4-1 1-2 4-2 4 1z" fill="#d01818"/></svg></button>
            <button class="btn" aria-label="Save preset"><svg><use href="#save-data"/></svg></button><button class="btn on" aria-label="Advanced"><svg><use href="#gear"/></svg></button>
          </div>
        </div>
        <div class="data"><label for="data">Data:</label><input id="data" class="field" disabled></div>
        <div class="checks loose">
          <label><input type="checkbox">Use log scale when mapping data to colors</label>
          <label><input type="checkbox">Enable opacity mapping for surfaces</label>
        </div>
        <p class="cap">Color transfer function values</p>
        <div class="grid color-table">
          <table><thead><tr><th></th><th>Value</th><th>R</th><th>G</th><th class="cut">B</th></tr></thead><tbody><tr><th scope="row">1</th><td>0</td><td>0</td><td>0</td><td>1</td></tr><tr><th scope="row">2</th><td>8.70777</td><td>1</td><td>0</td><td>0</td></tr></tbody></table>
          <div class="hbar"><svg class="l"><use href="#chev"/></svg><div><i></i></div><svg class="r"><use href="#chev"/></svg></div>
        </div>
        <p class="cap">Opacity transfer function values</p>
        <div class="grid opacity-table">
          <table><thead><tr><th></th><th>Value</th><th>Opacity</th></tr></thead><tbody><tr><th scope="row">1</th><td>0</td><td>0</td></tr><tr><th scope="row">2</th><td>8.70777</td><td>1</td></tr></tbody></table>
        </div>
        <h3>Color Mapping Parameters</h3>
        <div class="row space"><label for="space">Color Space</label><div class="combo"><select id="space"><option>HSV</option></select></div></div>
        <button class="btn nan"><svg viewBox="0 0 16 16"><circle cx="8" cy="8" r="7" fill="#808080" stroke="#444"/></svg>Nan Color</button>
        <h3>Color Discretization</h3>
      </div>
      <div class="vbar"><svg><use href="#chev"/></svg><i></i><svg class="down"><use href="#chev"/></svg></div>
    </div>
  </aside>
</main>

<footer class="status"><button class="btn" disabled aria-label="Abort"><svg viewBox="0 0 10 10"><path d="m1 1 8 8M9 1 1 9" stroke="#888" stroke-width="3"/></svg></button><div class="progress"></div></footer>
</body>
</html>
```
FILE: styles.css
```css
* { box-sizing: border-box; margin: 0; padding: 0; }
:root {
  --bg: #f0f0f0;
  --line: #adadad;
  --ui: "DejaVu Sans Condensed", "DejaVu Sans", sans-serif;
  --seg: "Open Sans", "Noto Sans", sans-serif;
}
body { display: flex; flex-direction: column; height: 100vh; overflow: hidden; background: var(--bg); font: 13px/16px var(--ui); color: #000; }
button, input, select { font: inherit; color: inherit; border: 0; background: none; border-radius: 0; appearance: none; }
svg { display: block; flex: none; }
.defs { position: absolute; width: 0; height: 0; }
ul { list-style: none; }

/* window chrome */
.titlebar { display: flex; align-items: center; height: 22px; flex: none; padding-top: 2px; background: #fff; color: #8c8c8c; font: 11px/16px var(--seg); }
.logo { width: 16px; height: 12px; margin-right: 5px; }
.winctl { display: flex; margin-left: auto; padding-right: 1px; }
.winctl button { width: 46px; height: 20px; display: grid; place-items: center; }
.winctl svg { width: 12px; height: 12px; fill: none; stroke: #888; }
.menubar { display: flex; align-items: center; gap: 17px; height: 22px; flex: none; padding-left: 6px; background: #fff; font: 11px/16px var(--seg); }
.menubar a { color: #8c8c8c; text-decoration: none; }

/* toolbars */
.toolrow { display: flex; flex: none; height: 34px; border-bottom: 1px solid #b4b4b4; }
.tools { display: flex; align-items: center; padding-right: 1px; border-right: 1px solid #b4b4b4; box-shadow: 1px 0 #fff; margin-right: 1px; }
.tools.last { border: 0; box-shadow: none; }
.tools::before { content: ""; width: 2px; height: 27px; margin: 0 4px 0 2px; background: repeating-linear-gradient(#b4b4b4 0 2px, transparent 2px 4px); }
.tools > button { position: relative; display: grid; place-items: center; width: 31px; height: 29px; }
.tools > button svg { width: 24px; height: 24px; overflow: visible; }
.tools > button.on { background: #bfdcf5; border: 1px solid #88bfee; }
.tools text { font: bold 9px var(--seg); fill: #666; }
.tools .has-menu::after { content: ""; position: absolute; right: 3px; bottom: 4px; border: 3px solid transparent; border-top-color: #000; border-bottom: 0; }
.tools .sep { width: 1px; height: 24px; margin: 0 2px 0 3px; background: #c4c4c4; }
.vcr { fill: #a4dc8c; stroke: #5c8450; stroke-width: 1px; }
.vcr > button svg { width: 22px; height: 22px; }
.tools label { margin: 0 2px 0 1px; }
.field { height: 22px; padding: 0 3px; background: #fff; border: 1px solid #7a7a7a; min-width: 0; }
.field::placeholder { color: #757575; opacity: 1; }
.field:disabled { background: var(--bg); border-color: #ccc; box-shadow: inset 0 0 0 1px #fff; color: #777; }
.time { width: 134px; margin-right: 2px; }
.spin { display: flex; width: 33px; height: 22px; margin-right: 3px; background: #fff; border: 1px solid #7a7a7a; }
.spin input { width: 18px; padding-left: 3px; }
.spin svg { width: 13px; height: 20px; }

.combo { position: relative; height: 22px; min-width: 0; font-size: 12px; }
.combo select { width: 100%; height: 22px; padding: 0 18px 0 4px; background: #e1e1e1 url('data:image/svg+xml,<svg xmlns="http://www.w3.org/2000/svg" width="8" height="5"><path d="M0 0h8L4 4z"/></svg>') no-repeat right 5px center; border: 1px solid var(--line); }
.combo select:disabled { background-color: #ccc; background-image: url('data:image/svg+xml,<svg xmlns="http://www.w3.org/2000/svg" width="8" height="5"><path d="M0 0h8L4 4z" fill="%23a0a0a0"/></svg>'); border-color: #bfbfbf; }
.with-dot svg { position: absolute; left: 9px; top: 7px; width: 8px; height: 8px; }
.with-dot select { padding-left: 23px; }
.color-by { width: 149px; margin-right: 5px; }
.component { width: 69px; }
.repr { width: 152px; }

/* docks */
.workspace { display: grid; grid-template-columns: 336px minmax(0, 1fr) 390px; flex: 1; min-height: 0; padding-top: 1px; }
.left, .right, .center { display: flex; flex-direction: column; min-height: 0; }
.dock { display: flex; align-items: center; justify-content: space-between; flex: none; height: 22px; padding: 0 3px; background: #d9d9d9; border: 1px solid #b8b8b8; border-left: 0; font: 12px/16px var(--ui); }
.right .dock { padding: 0 2px 0 5px; border-left: 1px solid #b8b8b8; }
.dock button { width: 11px; height: 11px; padding: 1px; }
.dock svg { width: 9px; height: 9px; }
.tree { height: 305px; flex: none; margin: 1px 0 4px; padding-top: 3px; background: #fff; border: 1px solid #828790; border-left: 0; font-size: 12px; }
.tree li { display: flex; align-items: center; height: 22px; }
.vis { width: 39px; padding-left: 3px; color: #1a2430; }
.vis.off { color: #999; }
.vis svg { width: 14px; height: 10px; }
.node { position: relative; width: 16px; }
.node::before { content: ""; position: absolute; left: 8px; top: -4px; width: 1px; height: 5px; background: #808080; }
.node svg { width: 16px; height: 16px; }
.node .host { width: 15px; height: 14px; }
.name { padding: 0 3px; }
.selected { padding: 0 2px; border: 1px dotted #f08030; background: var(--bg); color: #fff; }
.tabs { display: flex; flex: none; align-items: flex-end; height: 25px; margin-bottom: 1px; border-bottom: 1px solid #a8a8a8; }
.tabs button { height: 22px; padding: 0 9px; border: 1px solid #dcdcdc; border-left: 0; border-bottom: 0; }
.tabs .active { height: 25px; padding: 0 12px 0 10px; background: #fff; }
.actions { display: grid; grid-template-columns: repeat(4, 1fr); gap: 4px; flex: none; margin: 11px 10px 7px 8px; }
.btn { display: flex; align-items: center; justify-content: center; gap: 5px; height: 22px; background: #e1e1e1; border: 1px solid var(--line); font-size: 12px; }
.btn:disabled { background: #ccc; border-color: #bfbfbf; color: #838383; }
.btn.on { background: #cce4f7; border-color: #00549a; }
.btn svg { width: 16px; height: 16px; }
.actions svg { width: 14px; height: 14px; }
.faded { filter: grayscale(1) opacity(.6); }
.help { font: bold 16px/20px "DejaVu Sans", sans-serif; color: #2a8cd0; }
.searchrow { display: flex; align-items: center; flex: none; gap: 4px; margin: 0 10px 5px 7px; }
.searchrow .field { flex: 1; }
.btn.sq { width: 21px; height: 21px; }
.sq svg { width: 18px; height: 18px; }
.sq .e { font: italic 900 15px "DejaVu Sans", sans-serif; }
.scroller { display: flex; flex: 1; min-height: 0; margin: 0 10px 12px 7px; }
.props, .cmap { flex: 1; min-width: 0; overflow: hidden; }
.vbar { display: flex; flex-direction: column; align-items: center; justify-content: space-between; width: 16px; padding: 6px 0; border-left: 1px solid #fff; }
.vbar svg, .hbar svg { width: 8px; height: 6px; }
.vbar i { align-self: stretch; height: 664px; margin: 5px 0 auto; background: #cdcdcd; }
.short i { height: 129px; }
.down { transform: rotate(180deg); }

.group-head { display: flex; align-items: center; gap: 6px; height: 26px; margin-bottom: 6px; padding-right: 1px; }
.group-head .btn { width: 26px; flex: none; }
.fold { display: flex; align-items: center; flex: 1; min-width: 0; height: 26px; padding: 0 9px; background: #f4f4f4; border: 1px solid #828790; font-weight: bold; }
.fold svg { width: 16px; height: 14px; margin-right: 6px; }
.fold span { overflow: hidden; white-space: nowrap; }
.row { display: flex; height: 22px; }
.row .combo { flex: 1; }
.row label { font-size: 12px; line-height: 17px; margin-right: 5px; }
.repr-row label { width: 103px; }
.checks label { display: flex; align-items: center; height: 24px; }
.props .checks { padding-top: 2px; }
.dim { color: #838383; }
input[type="checkbox"] { width: 13px; height: 13px; margin: 0 5px 2px 0; background: #fff; border: 1px solid #333; }
input[type="checkbox"]:checked { background: url('data:image/svg+xml,<svg xmlns="http://www.w3.org/2000/svg" width="11" height="11"><path d="m2 5 3 3 5-6" fill="none" stroke="%23333" stroke-width="1.300"/></svg>') #fff; }
input[type="checkbox"]:disabled { border-color: #ccc; }
h3 { font: bold 13px/16px var(--ui); height: 18px; border-bottom: 1px solid #a0a0a0; box-shadow: 0 1px #fff; }
.props h3 { margin: 7px 0 6px; }
.range { height: 16px; margin-bottom: 4px; font-size: 12px; }
.iso { display: flex; align-items: flex-end; gap: 6px; margin-bottom: 6px; }
.iso .grid { width: 208px; height: 91px; margin-right: -5px; }
.grid { display: flex; flex-direction: column; background: linear-gradient(90deg, #f0f0f0 15px, #fff 15px); border: 1px solid #828790; }
table { width: 100%; border-collapse: collapse; table-layout: fixed; font: 11px/14px var(--seg); }
td, thead th { border-right: 1px solid #d8d8d8; }
td { height: 30px; padding: 0 3px; border-bottom: 1px solid #d8d8d8; }
th { width: 15px; background: #fff; font-weight: normal; text-align: center; font-size: 12px; }
thead th { height: 23px; width: auto; font-size: 11px; }
thead th:first-child { width: 15px; }
tr:nth-child(2) td { background: #f5f5f5; }
tr :last-child { border-right: 0; }
.stack { display: flex; flex-direction: column; gap: 3px; }
.stack .btn { width: 21px; height: 20px; }
.stack .btn svg { width: 16px; height: 16px; }
.stack .btn svg:has([href="#redx"]) { width: 14px; height: 14px; }
.btn.wide { width: 30px; flex: none; gap: 2px; }
.btn.wide .tri { width: 8px; height: 5px; }
.pair { display: grid; grid-template-columns: 1fr 1fr; gap: 4px; }

/* render view */
.center { padding: 0 6px 0 4px; }
.views { height: 23px; border: 0; margin: 0; padding-left: 1px; }
.views button { display: flex; align-items: center; height: 21px; padding: 0 9px; font-size: 12px; }
.views .active { height: 23px; padding: 0 14px 0 10px; gap: 5px; border-left: 1px solid #dcdcdc; }
.views svg { width: 9px; height: 9px; }
.frame { display: flex; flex-direction: column; flex: 1; min-height: 0; margin-bottom: 4px; border: 1px solid #dcdcdc; background: #fff; padding: 0 1px 2px; }
.viewbar { display: flex; align-items: center; flex: none; height: 21px; padding: 0 2px 1px 0; }
.viewbar > button { display: grid; place-items: center; width: 19px; height: 18px; }
.viewbar > button svg { width: 13px; height: 13px; }
.viewbar > i { width: 1px; height: 12px; margin: 0 3px 0 2px; background: #c4c4c4; }
.viewbar .threed { font-size: 10px; }
.viewbar text { font: bold 12px var(--seg); fill: #555; }
.vname { margin-left: auto; color: #000; font-weight: bold; }
.vbtns { display: flex; gap: 3px; margin-left: 12px; }
.vbtns button { display: grid; place-items: center; width: 17px; height: 17px; background: #e1e1e1; border: 1px solid var(--line); }
.vbtns svg { width: 10px; height: 10px; fill: none; stroke: #000; stroke-width: 1.300; }
.canvas { position: relative; flex: 1; min-height: 0; background: #52576e; border: 2px solid #00f; box-shadow: inset 0 0 0 1px #fff; }
.legend { position: absolute; right: 101px; top: 231px; width: 120px; height: 280px; overflow: visible; }
.canvas text { fill: #fff; font: 16px "Liberation Sans", sans-serif; }
.canvas .axis-title { font: 300 17px Inter, "Liberation Sans", sans-serif; }
.triad { position: absolute; left: 81px; bottom: 86px; width: 90px; height: 75px; }

/* color map editor */
.right .searchrow { margin: 11px 10px 0 9px; }
.array { flex: none; height: 28px; line-height: 29px; margin: 0 9px; font-size: 12px; }
.right .scroller { margin-left: 9px; }
.cmap > .checks:first-child { margin-top: -2px; }
.cmap h3 { margin: 5px 0 5px; }
.mapping { display: flex; gap: 2px; align-items: center; }
.curve { flex: 1; height: 184px; min-width: 0; background: #fff; }
.data { display: flex; align-items: center; gap: 5px; margin: 6px 0 4px; font-size: 12px; }
.data .field { flex: 1; }
.loose label { height: 26px; }
.cap { height: 24px; line-height: 21px; }
.color-table { height: 132px; margin-bottom: 4px; }
.hbar { display: flex; align-items: center; gap: 4px; height: 16px; margin-top: auto; padding: 0 4px; background: var(--bg); }
.hbar div { flex: 1; height: 15px; }
.hbar i { display: block; width: 74%; height: 15px; background: #cdcdcd; }
.l { transform: rotate(-90deg); }
.r { transform: rotate(90deg); }
.color-table .cut { padding-left: 14px; }
.opacity-table { height: 115px; }
.cmap .opacity-table + h3 { margin-top: 8px; }
.space label { width: 97px; }
.btn.nan { width: calc(100% - 2px); height: 20px; margin: 5px 1px 0; padding-left: 4px; justify-content: flex-start; gap: 4px; }
.cmap .nan + h3 { margin-top: 9px; }

.status { display: flex; align-items: center; gap: 2px; flex: none; height: 21px; padding-left: 50%; padding-right: 5px; }
.status .btn { width: 16px; height: 17px; }
.status svg { width: 8px; height: 8px; }
.progress { flex: 1; height: 21px; background: #e6e6e6; border: 1px solid #bcbcbc; }
```
